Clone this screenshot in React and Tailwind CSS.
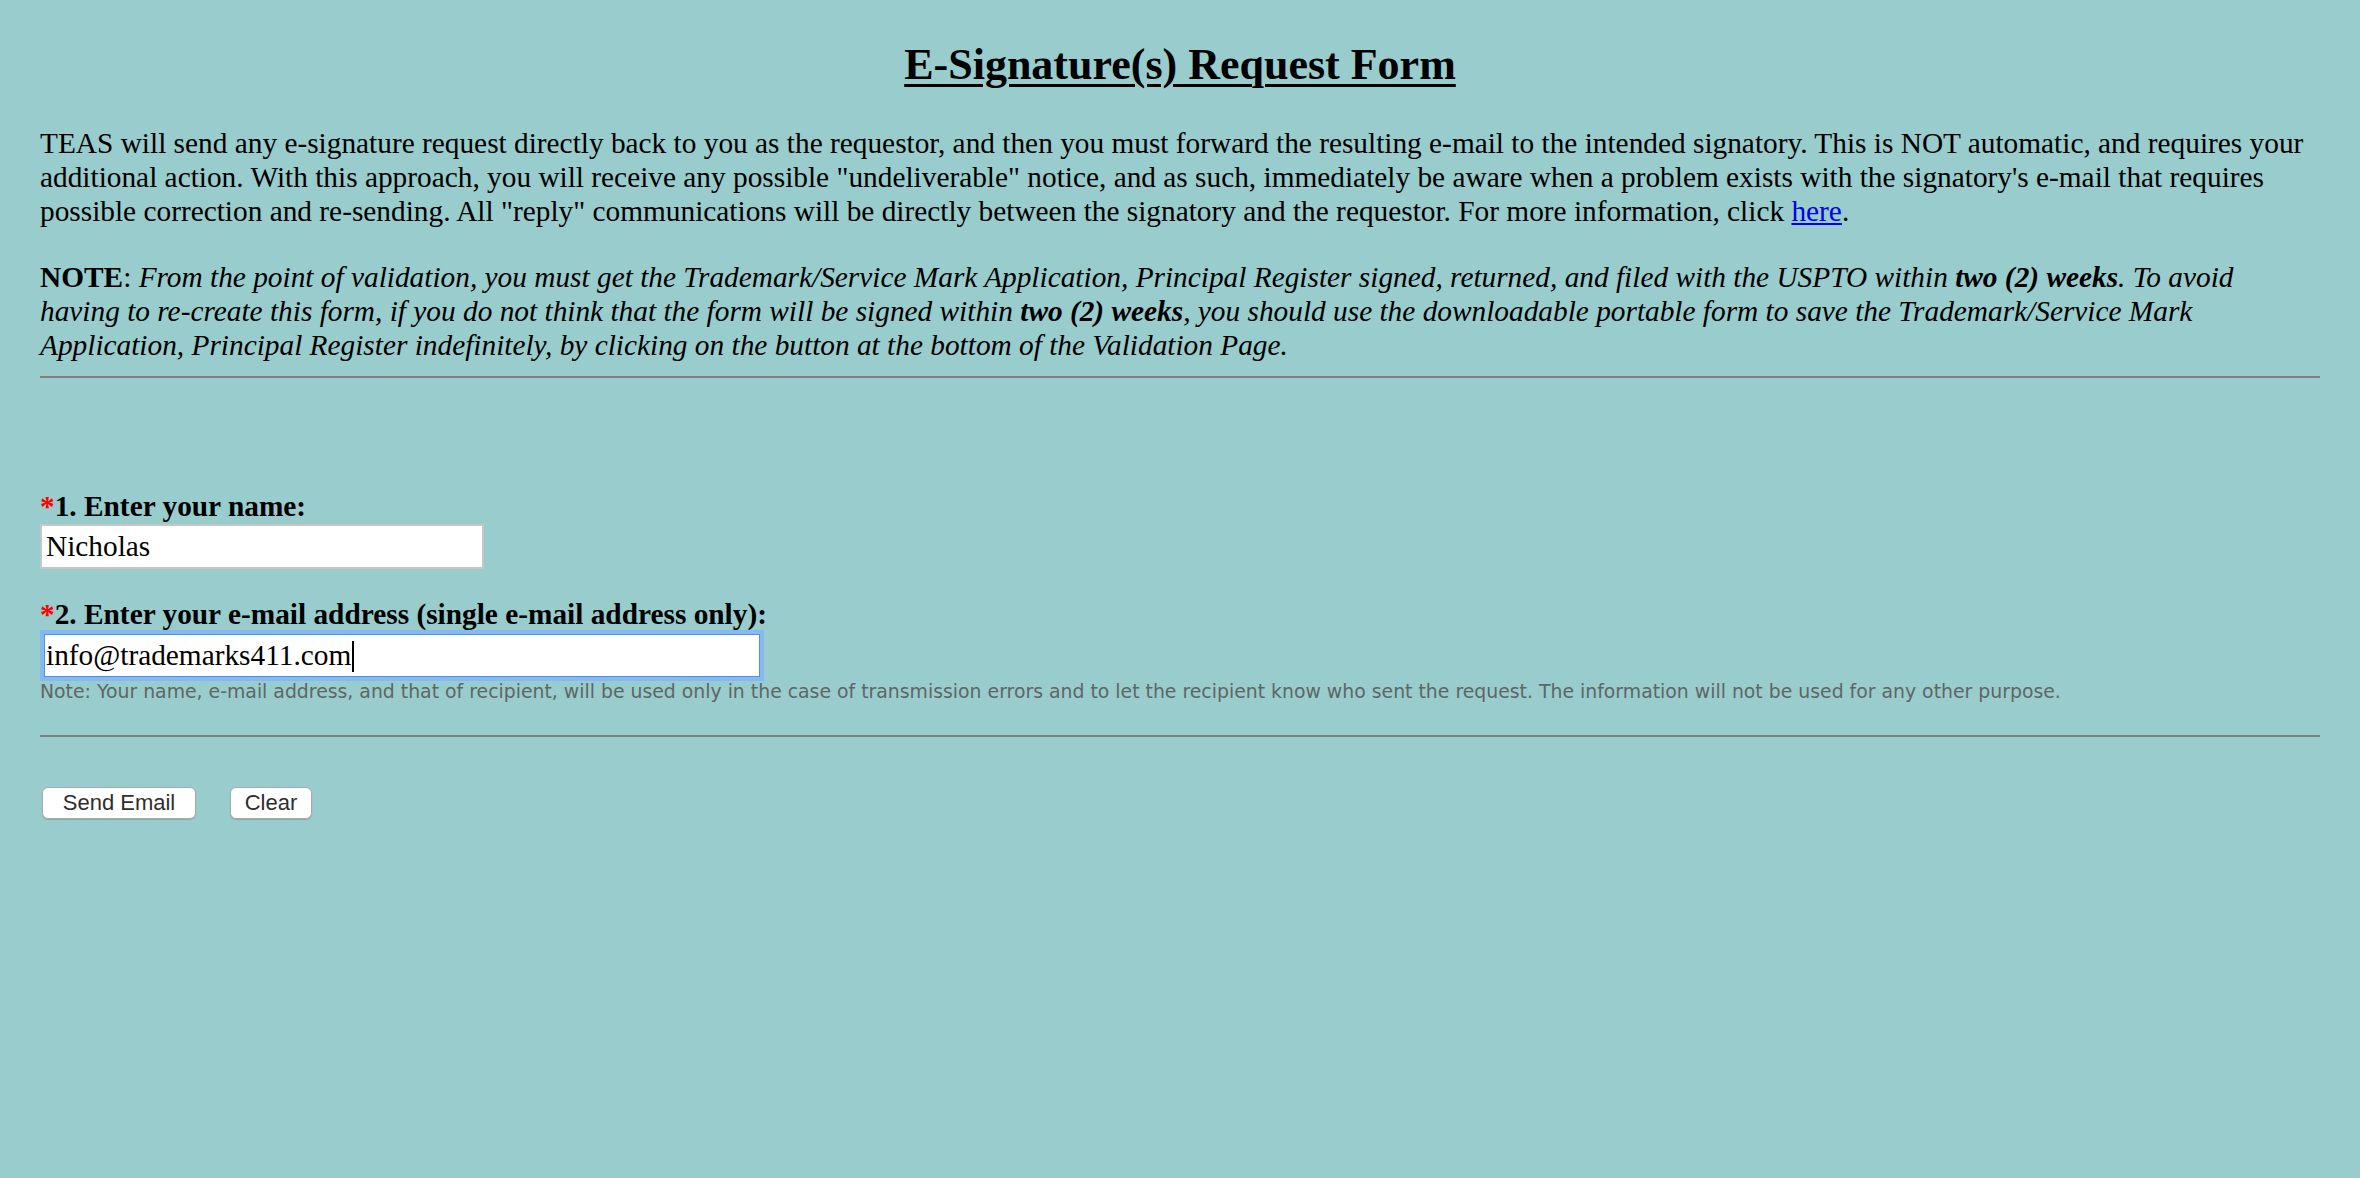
import React from 'react';

const serif = { fontFamily: '"Liberation Serif", "Times New Roman", serif' };

const Required = () => <span className="text-[#ff0000] font-bold">*</span>;

const App = () => {
  return (
    <div
      className="min-h-[1178px] w-full bg-[#99cccc] px-[40px] pt-[40px] text-black text-[29.33px] leading-[34px] font-['Liberation_Serif',serif]"
    >
      <h1 className="text-center text-[44px] leading-[50px] font-bold underline decoration-[3px] underline-offset-[5px]">
        E-Signature(s) Request Form
      </h1>

      <p className="mt-[36px]">
        TEAS will send any e-signature request directly back to you as the requestor, and then you must forward the
        resulting e-mail to the intended signatory. This is NOT automatic, and requires your additional action. With
        this approach, you will receive any possible "undeliverable" notice, and as such, immediately be aware when a
        problem exists with the signatory's e-mail that requires possible correction and re-sending. All "reply"
        communications will be directly between the signatory and the requestor. For more information, click{' '}
        <a href="#" className="text-[#0000ee] underline">here</a>.
      </p>

      <p className="mt-[32px]">
        <b>NOTE</b>:{' '}
        <i>
          From the point of validation, you must get the Trademark/Service Mark Application, Principal Register
          signed, returned, and filed with the USPTO within <b>two (2) weeks</b>. To avoid having to re-create this
          form, if you do not think that the form will be signed within <b>two (2) weeks</b>, you should use the
          downloadable portable form to save the Trademark/Service Mark Application, Principal Register indefinitely,
          by clicking on the button at the bottom of the Validation Page.
        </i>
      </p>

      <div className="mt-[14px] h-[2px] bg-[#808080]" />

      <form onSubmit={(e) => e.preventDefault()}>
        <label className="mt-[111px] block font-bold">
          <Required />1. Enter your name:
        </label>
        <input
          type="text"
          defaultValue="Nicholas"
          style={serif}
          className="mt-[1px] block h-[45px] w-[444px] border-2 border-[#c6c6c6] bg-white pl-[4px] text-[29.33px] text-black outline-none"
        />

        <label className="mt-[28px] block font-bold">
          <Required />2. Enter your e-mail address (single e-mail address only):
        </label>
        <div className="relative ml-[4px] mt-[3px] w-[716px]">
          <input
            type="text"
            defaultValue="info@trademarks411.com"
            style={serif}
            className="block h-[43px] w-full border border-[#4d92e6] bg-white pl-[1px] text-[29.33px] text-black outline-none ring-[4px] ring-[#86b8f1]"
          />
          {/* text caret */}
          <span className="absolute left-[308px] top-[7px] h-[31px] w-[2px] bg-black" />
        </div>

        <p className="mt-[4px] text-[18.85px] leading-[22px] text-[#5e6666] font-['DejaVu_Sans',sans-serif]">
          Note: Your name, e-mail address, and that of recipient, will be used only in the case of transmission errors
          and to let the recipient know who sent the request. The information will not be used for any other purpose.
        </p>

        <div className="mt-[32px] h-[2px] bg-[#808080]" />

        <div className="ml-[2px] mt-[50px] flex gap-[34px] font-['Liberation_Sans',Arial,sans-serif] text-[22px] text-[#2e2e2e]">
          <button
            type="submit"
            className="h-[32px] w-[154px] rounded-[6px] border border-[#a9a9a9] bg-white leading-none shadow-[0_1px_1px_rgba(0,0,0,0.15)]"
          >
            Send Email
          </button>
          <button
            type="reset"
            className="h-[32px] w-[82px] rounded-[6px] border border-[#a9a9a9] bg-white leading-none shadow-[0_1px_1px_rgba(0,0,0,0.15)]"
          >
            Clear
          </button>
        </div>
      </form>
    </div>
  );
};

export default App;
